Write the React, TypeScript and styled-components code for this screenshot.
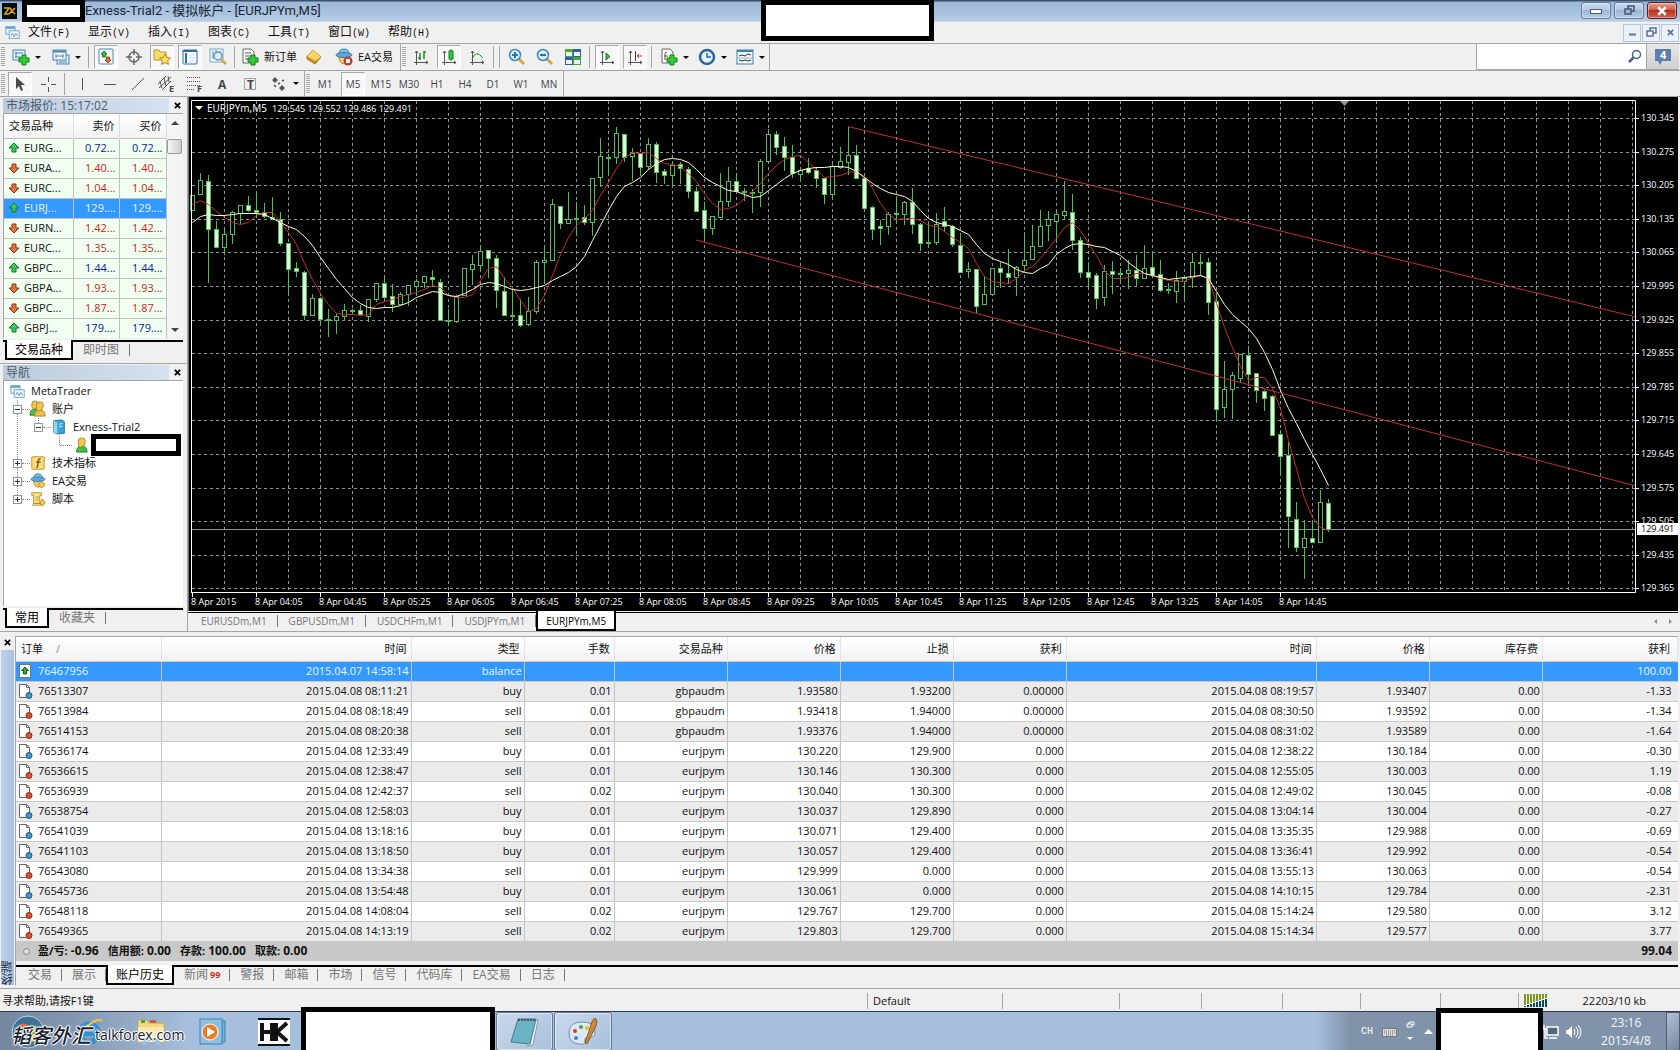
import React from "react";
import styled, { createGlobalStyle, css } from "styled-components";

const UI = `"Open Sans", "Noto Sans CJK SC", sans-serif`;

const GlobalStyle = createGlobalStyle`
  * { box-sizing: border-box; }
  body { margin: 0; background: #f0f0f0; font: 11px/16px ${UI}; color: #111; }
  button { font: inherit; color: inherit; background: none; border: 0; padding: 0; margin: 0; }
  table { border-collapse: collapse; table-layout: fixed; }
  ul { list-style: none; margin: 0; padding: 0; }
  svg { display: block; flex: none; overflow: visible; }
`;

/* ---------- shared pieces ---------- */

const Window = styled.div`
  display: flex;
  flex-direction: column;
  min-width: 1100px;
  overflow: hidden;
`;

const Mask = styled.div`
  background: #fff;
  border: 5px solid #000;
`;

const Spacer = styled.div`
  flex: 1;
`;

/* ---------- title bar and menu ---------- */

const Header = styled.header`
  position: relative;
`;

const TitleBar = styled.div`
  display: flex;
  align-items: center;
  height: 22px;
  padding: 0 3px 0 2px;
  background: linear-gradient(#3c506c 0, #3c506c 1px, #9db9d8 2px, #a9c2de 60%, #b7cde6 100%);
  border-bottom: 1px solid #c9d9ea;
`;

const AppIcon = styled.svg`
  margin-right: 5px;
`;

const TitleMask = styled(Mask)`
  width: 63px;
  height: 22px;
`;

const Title = styled.span`
  flex: 1;
  color: #1a2433;
  font: 13px/20px Roboto, "Noto Sans CJK SC", sans-serif;
`;

const CaptionButton = styled.button<{ $close?: boolean }>`
  display: grid;
  place-items: center;
  width: 30px;
  height: 17px;
  margin-left: 3px;
  border: 1px solid ${(p) => (p.$close ? "#5b1f22" : "#5f7a9c")};
  border-radius: 3px;
  background: ${(p) =>
    p.$close
      ? "linear-gradient(#e0a193, #cf5f4a 45%, #b8321e 50%, #d0634f)"
      : "linear-gradient(#c6d8ec, #b3cae3 45%, #9ab5d4 50%, #b5cce5)"};
  box-shadow: inset 0 0 0 1px rgba(255, 255, 255, 0.4);
`;

const MenuBar = styled.nav`
  display: flex;
  align-items: center;
  height: 21px;
  padding: 0 1px 0 5px;
  font-size: 12px;
`;

const MenuItem = styled.button`
  width: 60px;
  padding-left: 8px;
  text-align: left;
  white-space: nowrap;
`;

const MenuKey = styled.span`
  font: 10px/16px "Liberation Mono", monospace;
`;

const ChildButton = styled.button`
  display: grid;
  place-items: center;
  width: 18px;
  height: 18px;
  margin-left: 1px;
  border: 1px solid #b3c6da;
  background: #eaf1f9;
`;

const TopMask = styled(Mask)`
  position: absolute;
  top: 0;
  left: 45.3%;
  width: 173px;
  height: 41px;
`;

/* ---------- toolbars ---------- */

const Toolbar = styled.div<{ $h: number }>`
  display: flex;
  align-items: stretch;
  height: ${(p) => p.$h}px;
  border-top: 1px solid #a5a5a5;
`;

const ToolGroup = styled.div`
  display: flex;
  align-items: center;
  padding-left: 1px;
  border-right: 1px solid #a5a5a5;
`;

const Grip = styled.span`
  width: 4px;
  height: 20px;
  margin-right: 1px;
  background: repeating-linear-gradient(#a8a8a8 0 1px, #f0f0f0 1px 2px);
`;

const Divider = styled.span`
  width: 1px;
  height: 22px;
  margin: 0 3px 0 2px;
  background: #a5a5a5;
`;

const Tool = styled.button<{ $w?: number; $on?: boolean }>`
  display: flex;
  align-items: center;
  justify-content: center;
  gap: 5px;
  width: ${(p) => p.$w ?? 28}px;
  height: 24px;
  white-space: nowrap;
  font-size: 11px;
  ${(p) =>
    p.$on &&
    css`
      width: 24px;
      margin: 0 2px;
      background: #f8f8f8;
      border: 1px solid #a8a8a8;
      border-right-color: #fff;
      border-bottom-color: #fff;
    `}
`;

const Period = styled(Tool)`
  font-size: 10px;
  color: #444;
`;

const Caret = styled.span`
  border: 3px solid transparent;
  border-top-color: #000;
  border-bottom: 0;
`;

const SearchArea = styled.form`
  display: flex;
  margin-left: auto;
  padding-right: 1px;
`;

const SearchBox = styled.label`
  display: flex;
  align-items: center;
  width: 171px;
  padding-right: 4px;
  background: #fff;
  border: 1px solid #a5a5a5;
  border-top: 0;
`;

const SearchInput = styled.input`
  flex: 1;
  min-width: 0;
  border: 0;
  outline: 0;
  background: transparent;
  font: 11px/16px ${UI};
`;

const NewsButton = styled.button`
  display: grid;
  place-items: center;
  width: 32px;
  background: linear-gradient(#e8e8e8, #cfcfcf);
  border-bottom: 1px solid #a5a5a5;
`;

/* ---------- side panels ---------- */

const Workspace = styled.main`
  display: grid;
  grid-template-columns: 188px 1fr;
  border-top: 1px solid #a5a5a5;
`;

const Side = styled.aside`
  display: flex;
  flex-direction: column;
`;

const Panel = styled.section<{ $grow?: boolean }>`
  display: flex;
  flex-direction: column;
  flex: ${(p) => (p.$grow ? 1 : "none")};
  padding: 1px 4px 3px 3px;
  border-right: 1px solid #a5a5a5;
  border-bottom: 1px solid #a5a5a5;
`;

const PanelTitle = styled.div`
  display: flex;
  align-items: center;
  justify-content: space-between;
  height: 15px;
  background: linear-gradient(90deg, #bccbdc, #d5e2f0 92%, #f0f0f0 92%);
  color: #4c5a6b;
  font-size: 12px;
  line-height: 14px;
  padding: 0 1px 0 3px;
`;

const CloseButton = styled.button`
  display: grid;
  place-items: center;
  width: 9px;
  height: 12px;
`;

const PanelBody = styled.div<{ $grow?: boolean }>`
  display: flex;
  flex: ${(p) => (p.$grow ? 1 : "none")};
  flex-direction: ${(p) => (p.$grow ? "column" : "row")};
  background: ${(p) => (p.$grow ? "#fff" : "#f4f4f4")};
  border: 1px solid #a5a5a5;
  border-width: 1px 0 0 1px;
`;

const Quotes = styled.table`
  width: 162px;
  th {
    height: 24px;
    padding: 1px 4px 0 5px;
    font-weight: 400;
    text-align: right;
    background: linear-gradient(#fff, #f2f2f2);
    border-right: 1px solid #dedede;
  }
  th:first-child {
    text-align: left;
  }
`;

const QuoteRow = styled.tr<{ $up: boolean; $sel?: boolean }>`
  background: ${(p) => (p.$sel ? "#3399ff" : "#f0fff0")};
  td {
    height: 20px;
    padding: 0 3px 0 0;
    border: 1px solid #c0c0c0;
    border-width: 1px 1px 0 0;
    text-align: right;
    white-space: nowrap;
    color: ${(p) => (p.$sel ? "#e8f4ff" : p.$up ? "#10209a" : "#c8281e")};
  }
  td:first-child {
    color: ${(p) => (p.$sel ? "#e8f4ff" : "#111")};
  }
`;

const SymbolCell = styled.div`
  display: flex;
  align-items: center;
  gap: 4px;
  padding-left: 4px;
`;

const ScrollTrack = styled.div`
  display: flex;
  flex-direction: column;
  align-items: center;
  flex: 1;
  padding: 7px 0 6px;
`;

const ScrollArrow = styled.span<{ $down?: boolean }>`
  border: 4px solid transparent;
  border-width: ${(p) => (p.$down ? "4px 4px 0" : "0 4px 4px")};
  border-top-color: ${(p) => (p.$down ? "#444" : "transparent")};
  border-bottom-color: ${(p) => (p.$down ? "transparent" : "#444")};
`;

const ScrollThumb = styled.span`
  width: 15px;
  height: 15px;
  margin: 14px 0 auto;
  border: 1px solid #999;
  border-radius: 2px;
  background: linear-gradient(90deg, #f6f6f6, #cfcfcf);
`;

const Tabs = styled.div<{ $side?: boolean; $indent?: number }>`
  display: flex;
  align-items: flex-start;
  height: 20px;
  border-top: 2px solid #000;
  margin-top: ${(p) => (p.$side ? 2 : 0)}px;
  padding-left: ${(p) => p.$indent ?? 2}px;
`;

const Tab = styled.button<{ $on?: boolean; $pad?: number }>`
  display: flex;
  align-items: center;
  height: 16px;
  padding-left: ${(p) => p.$pad ?? 10}px;
  font-size: 12px;
  color: #777;
  white-space: nowrap;
  &::after {
    content: "";
    width: 1px;
    height: 12px;
    margin-left: ${(p) => (p.$pad ? p.$pad - 1 : 10)}px;
    background: #777;
  }
  ${(p) =>
    p.$on &&
    css`
      height: 20px;
      margin-top: -2px;
      padding: 1px 8px 0;
      background: #fff;
      color: #000;
      border: solid #000;
      border-width: 0 2px 2px;
      &::after {
        display: none;
      }
    `}
`;

const ChartTab = styled(Tab)`
  font-size: 10px;
`;

/* ---------- navigator tree ---------- */

const Tree = styled.ul`
  padding-top: 1px;
`;

const Branch = styled.ul<{ $x: number; $end: number }>`
  position: relative;
  &::before {
    content: "";
    position: absolute;
    top: 0;
    bottom: ${(p) => p.$end}px;
    left: ${(p) => p.$x}px;
    border-left: 1px dotted #888;
  }
`;

const TreeRow = styled.div<{ $indent: number }>`
  position: relative;
  display: flex;
  align-items: center;
  height: 18px;
  padding-left: ${(p) => p.$indent}px;
  white-space: nowrap;
`;

const Toggle = styled.button`
  display: grid;
  place-items: center;
  width: 9px;
  height: 9px;
  border: 1px solid #8a97a8;
  background: #fff;
`;

const Dots = styled.span<{ $w?: number }>`
  width: ${(p) => p.$w ?? 8}px;
  border-top: 1px dotted #888;
`;

const TreeLabel = styled.span`
  margin-left: 6px;
`;

const TreeMask = styled(Mask)`
  width: 90px;
  height: 22px;
  margin-left: 3px;
`;

/* ---------- chart ---------- */

const ChartColumn = styled.section`
  display: flex;
  flex-direction: column;
  padding-right: 2px;
  border-bottom: 1px solid #a5a5a5;
`;

const ChartSvg = styled.svg`
  width: 100%;
  height: auto;
  overflow: hidden;
  background: #000;
  font-family: "Open Sans", sans-serif;
  font-size: 9px;
`;

const ChartTabs = styled(Tabs)`
  height: 19px;
  border-top-width: 1px;
  margin-top: 1px;
`;

const TabScroll = styled.div`
  display: flex;
  gap: 10px;
  margin-left: auto;
  padding: 4px 4px 0 0;
  color: #8c8c8c;
`;

/* ---------- terminal ---------- */

const Terminal = styled.section`
  display: grid;
  grid-template-columns: 15px 1fr;
  padding: 4px 2px 3px 0;
`;

const Rail = styled.div`
  display: flex;
  flex-direction: column;
  align-items: center;
`;

const RailLabel = styled.div`
  flex: 1;
  width: 13px;
  margin-top: 2px;
  background: linear-gradient(90deg, #a9c2e0, #bcd2ec);
  writing-mode: vertical-rl;
  transform: rotate(180deg);
  font-size: 12px;
  line-height: 13px;
  color: #1d2b40;
`;

const TerminalBody = styled.div`
  border: 1px solid #a5a5a5;
  border-width: 1px 0 0 1px;
`;

const Orders = styled.table`
  width: 100%;
  background: #fff;
  th {
    height: 24px;
    padding: 1px 4px 0 5px;
    font-weight: 400;
    text-align: right;
    background: linear-gradient(#fff, #f1f1f1);
    border-right: 1px solid #e2e6ea;
  }
  th:first-child {
    text-align: left;
  }
  th:last-child {
    padding-right: 7px;
  }
`;

const OrderRow = styled.tr<{ $alt?: boolean; $sel?: boolean }>`
  background: ${(p) => (p.$sel ? "#3399ff" : p.$alt ? "#ebebeb" : "#fff")};
  color: ${(p) => (p.$sel ? "#e8f4ff" : "#111")};
  td {
    height: 20px;
    padding: 0 2px 0 3px;
    text-align: right;
    white-space: nowrap;
    border-right: 1px solid #c4c4c4;
    border-top: 1px solid #c9c9c9;
  }
  td:last-child {
    padding-right: 6px;
    border-right: 0;
  }
`;

const OrderCell = styled.div`
  display: flex;
  align-items: center;
  gap: 6px;
`;

const SortMark = styled.span`
  margin-left: 13px;
  color: #888;
`;

const Summary = styled.div`
  display: flex;
  align-items: center;
  gap: 8px;
  height: 20px;
  margin-bottom: 4px;
  padding: 0 6px 0 7px;
  background: #c8c8c8;
  font-size: 12px;
  font-weight: 700;
`;

const Total = styled.span`
  margin-right: 1px;
`;

const TotalName = styled.span`
  font-size: 11px;
`;

const Badge = styled.span`
  margin-left: 2px;
  color: #d22b22;
  font-size: 9px;
  font-weight: 700;
`;

/* ---------- status bar and taskbar ---------- */

const StatusBar = styled.footer`
  display: flex;
  align-items: center;
  height: 23px;
  padding: 1px 34px 0 2px;
  border-top: 1px solid #a5a5a5;
`;

const StatusCell = styled.div<{ $w: number }>`
  width: ${(p) => p.$w}px;
  height: 16px;
  padding-left: 5px;
  border-left: 1px solid #a5a5a5;
`;

const StatusText = styled.div`
  flex: 1;
`;

const Traffic = styled.div`
  display: flex;
  align-items: center;
  justify-content: space-between;
  width: 128px;
  padding-left: 5px;
  border-left: 1px solid #a5a5a5;
`;

const Taskbar = styled.footer`
  position: relative;
  display: flex;
  align-items: center;
  height: 40px;
  border-top: 1px solid #2d3b4d;
  background: linear-gradient(90deg, #74879f 0, #8296b0 70px, #a5bfdc 190px, #a5bfdc calc(100% - 364px), #8193aa calc(100% - 330px), #8193aa 100%);
`;

const Launch = styled.button<{ $w: number; $open?: boolean }>`
  display: grid;
  place-items: center;
  width: ${(p) => p.$w}px;
  height: 39px;
  ${(p) =>
    p.$open &&
    css`
      margin-left: 1px;
      border: 1px solid #64799a;
      border-radius: 3px;
      background: linear-gradient(135deg, #c9daec, #a8c0dc);
      box-shadow: inset 0 0 0 1px rgba(255, 255, 255, 0.5);
    `}
`;

const TaskMask = styled(Mask)`
  align-self: stretch;
  width: 194px;
  margin-top: -5px;
  border-bottom: 0;
`;

const TrayMask = styled(Mask)`
  align-self: stretch;
  width: 107px;
  margin-top: -4px;
  border-bottom: 0;
`;

const Watermark = styled.div`
  position: absolute;
  top: 11px;
  left: 11px;
  display: flex;
  align-items: center;
  color: #16202e;
  white-space: nowrap;
  text-shadow: 1px 0 #fff, -1px 0 #fff, 0 1px #fff, 0 -1px #fff, 0 0 3px #fff;
`;

const Brush = styled.span`
  font: italic 500 20px/24px "Noto Sans CJK SC", sans-serif;
`;

const Site = styled.span`
  margin-left: 4px;
  font: 500 14px/20px "Open Sans", sans-serif;
`;

const Tray = styled.div`
  display: flex;
  align-items: center;
  gap: 9px;
  padding-right: 3px;
  color: #fff;
  font: 10px/16px "Liberation Mono", monospace;
`;

const Clock = styled.div`
  width: 66px;
  margin: 0 7px 0 11px;
  color: #f4f8fc;
  font-size: 12px;
  line-height: 18px;
  text-align: center;
`;

const ShowDesktop = styled.button`
  width: 14px;
  height: 39px;
  border: 1px solid #4c5d74;
  background: linear-gradient(135deg, #b4c2d3, #74879f);
`;

/* ---------- icons ---------- */

const Plus = ({ x = 7, y = 7 }: { x?: number; y?: number }) => (
  <path
    transform={`translate(${x} ${y})`}
    d="M3 0h4v3h3v4H7v3H3V7H0V3h3z"
    fill="#35cf35"
    stroke="#0b7d16"
    strokeWidth="1"
  />
);

const Svg = ({ size = 18, children }: { size?: number; children: React.ReactNode }) => (
  <svg width={size} height={size} viewBox="0 0 18 18" fill="none">
    {children}
  </svg>
);

const NewChart = () => (
  <Svg>
    <rect x="1" y="2" width="12" height="10" fill="#e6f3fc" stroke="#4585b5" />
    <path d="M3 5h8M4 4v6M3 9h6" stroke="#4585b5" />
    <Plus />
  </Svg>
);
const Profiles = () => (
  <Svg>
    <rect x="5" y="7" width="12" height="9" fill="#dcecf8" stroke="#4585b5" />
    <rect x="1" y="2" width="13" height="10" fill="#eef7fd" stroke="#4585b5" />
    <path d="M1 3.500h13" stroke="#4585b5" strokeWidth="2" />
    <path d="M4 6v4M11 6v4M4 8h7M7 14h8" stroke="#6b7f90" />
  </Svg>
);
const MarketIcon = () => (
  <Svg>
    <rect x="2" y="1" width="14" height="15" rx="1" fill="#fff" stroke="#4585b5" />
    <path d="M7 3l3 3H8.500v3h-3V6H4z" fill="#3fc13f" stroke="#168026" />
    <path d="M11 15l3-3h-1.500V9h-3v3H8z" fill="#e8734b" stroke="#a83b1c" />
  </Svg>
);
const Crosshair = () => (
  <Svg>
    <circle cx="9" cy="9" r="5" stroke="#666" strokeWidth="1.500" />
    <path d="M9 1v6M9 11v6M1 9h6M11 9h6" stroke="#666" strokeWidth="1.500" />
  </Svg>
);
const Star = () => (
  <Svg>
    <path d="M1 2h5l1 2h6v8H1z" fill="#f7dc72" stroke="#b9932a" />
    <path d="M12 6l1.700 3.500 3.800.5-2.800 2.600.7 3.800-3.400-1.800-3.400 1.800.7-3.800L6.500 10l3.800-.5z" fill="#ffe45c" stroke="#b38a1d" />
  </Svg>
);
const Book = () => (
  <Svg>
    <rect x="2" y="2" width="14" height="14" rx="1" fill="#f5fafe" stroke="#2e6ca5" />
    <path d="M2 3h14" stroke="#2e6ca5" strokeWidth="2" />
    <path d="M4 5h2v10H4z" fill="#2e6ca5" />
    <path d="M8 7h6M8 10h6M8 13h6" stroke="#cfdfec" />
  </Svg>
);
const Tester = () => (
  <Svg>
    <rect x="1" y="1" width="13" height="13" fill="#eef7fd" stroke="#7ba8cc" />
    <path d="M4 3v8M7 2v6M11 3v5" stroke="#4585b5" />
    <circle cx="9" cy="8" r="4" fill="#d9ecfa" stroke="#6c93b5" strokeWidth="1.500" />
    <path d="M12 11l5 5" stroke="#d7a53c" strokeWidth="2.500" />
  </Svg>
);
const Sheet = ({ script }: { script?: boolean }) => (
  <Svg>
    <path d="M2 1h8l3 3v11H2z" fill="#fff" stroke="#666" />
    <path d={script ? "M5 12V6q0-2 2-2M4 8h4" : "M4 5h6M4 8h6M4 11h4"} stroke="#555" />
    <Plus />
  </Svg>
);
const Gold = () => (
  <Svg>
    <path d="M2 8l6-6 8 7-6 7-8-5z" fill="#c98f25" stroke="#a8761c" />
    <path d="M2 8l6-6 8 7-6 4z" fill="#f7d365" />
  </Svg>
);
const Hat = ({ badge, size }: { badge?: boolean; size?: number }) => (
  <Svg size={size}>
    <path d="M4 9h10q0 6-5 7-5-1-5-7z" fill="#f1cf6c" stroke="#b58a2b" />
    <path d="M4 6q0-5 5-5t5 5z" fill="#7cc0e8" stroke="#3c82b4" />
    <ellipse cx="9" cy="7" rx="8" ry="2.500" fill="#5ba7d8" stroke="#3c82b4" />
    {badge ? (
      <>
        <circle cx="13" cy="13" r="4.500" fill="#c9372a" />
        <rect x="11" y="11" width="4" height="4" fill="#fff" />
      </>
    ) : (
      <path d="M13 9l4 4-4 4-4-4z" fill="#f3cd55" stroke="#a8801f" />
    )}
  </Svg>
);
const Axes = ({ children }: { children?: React.ReactNode }) => (
  <Svg>
    <path d="M4.500 3v14M2 14.500h14M3 5l1.500-2L6 5M14 13l2 1.500-2 1.500" stroke="#555" />
    {children}
  </Svg>
);
const Zoom = ({ plus }: { plus?: boolean }) => (
  <Svg>
    <path d="M11 11l5 5" stroke="#d7a53c" strokeWidth="3" />
    <circle cx="7" cy="7" r="5.500" fill="#dcf0fc" stroke="#3f86bd" strokeWidth="1.500" />
    <path d={plus ? "M4 7h6M7 4v6" : "M4 7h6"} stroke="#2a74ae" strokeWidth="2" />
  </Svg>
);
const Tiles = () => (
  <Svg>
    <path d="M1 1h8v8H1z" fill="#4fa32f" />
    <path d="M9 1h8v8H9z" fill="#2b5fa8" />
    <path d="M1 9h8v8H1z" fill="#2b5fa8" />
    <path d="M9 9h8v8H9z" fill="#4fa32f" />
    <path d="M2 4h6v4H2zM10 4h6v4h-6zM2 12h6v4H2zM10 12h6v4h-6z" fill="#eaf4fb" />
  </Svg>
);
const ClockIcon = () => (
  <Svg>
    <circle cx="9" cy="9" r="7" fill="#e4f1fb" stroke="#28659f" strokeWidth="2.500" />
    <path d="M9 5v4h4" stroke="#28659f" strokeWidth="1.500" />
  </Svg>
);
const Template = () => (
  <Svg>
    <rect x="1" y="2" width="16" height="14" fill="#f3fafe" stroke="#3d7fb3" />
    <path d="M1 3h16" stroke="#3d7fb3" strokeWidth="2" />
    <path d="M3 8l3-1 3 1 3-2 3 1M3 12l3 1 3-1 3 1 3-1" stroke="#333" />
    <path d="M1 10h16" stroke="#8db7d6" />
  </Svg>
);
const Cursor = () => (
  <Svg>
    <path d="M5 2v12l3-3 2 5 2-1-2-5h4z" fill="#4a4a4a" />
  </Svg>
);
const Line = ({ d }: { d: string }) => (
  <Svg>
    <path d={d} stroke="#555" />
  </Svg>
);
const IconText = styled.text<{ $big?: boolean }>`
  font: 700 ${(p) => (p.$big ? 12 : 9)}px "Open Sans", sans-serif;
  fill: #444;
`;
const Channel = () => (
  <Svg>
    <path d="M1 9L9 1M2 13L14 2M5 15l9-9M3 6l2 7M7 3l2 8M11 1l1 6" stroke="#555" />
    <IconText x="12" y="17">E</IconText>
  </Svg>
);
const Fibo = () => (
  <Svg>
    <path d="M2 2.500h14M2 6.500h14M2 10.500h14M2 14.500h8" stroke="#555" strokeDasharray="1 1" />
    <IconText x="12" y="17">F</IconText>
  </Svg>
);
const LetterA = () => (
  <Svg>
    <IconText $big x="5" y="14">A</IconText>
  </Svg>
);
const LetterT = () => (
  <Svg>
    <rect x="3.500" y="3.500" width="11" height="11" stroke="#555" strokeDasharray="1 1" />
    <IconText $big x="6" y="14">T</IconText>
  </Svg>
);
const Shapes = () => (
  <Svg>
    <path d="M2 5l3-3 3 3-3 3zM9 13l3-3 3 3-3 3z" fill="#555" />
    <path d="M4 10l2 2M8 9l2-1M12 6l2-1" stroke="#555" strokeWidth="1.500" />
  </Svg>
);
const Windows = ({ size = 15 }: { size?: number }) => (
  <Svg size={size}>
    <rect x="1" y="2" width="11" height="9" fill="#e8f4fb" stroke="#5b9cc7" />
    <path d="M1 3.500h11" stroke="#5b9cc7" strokeWidth="2" />
    <rect x="5" y="7" width="12" height="9" fill="#f3fafe" stroke="#5b9cc7" />
    <path d="M7 13l2-3 2 4 2-4 2 3" stroke="#4585b5" />
  </Svg>
);
const Arrow = ({ up, size = 12 }: { up: boolean; size?: number }) => (
  <svg width={size} height={size} viewBox="0 0 12 12">
    <path
      transform={up ? undefined : "rotate(180 6 6)"}
      d="M6 1l5 5H8v4H4V6H1z"
      fill={up ? "#3dc45a" : "#e8703c"}
      stroke={up ? "#0d7a2a" : "#8f3312"}
    />
  </svg>
);
const People = ({ pair }: { pair?: boolean }) => (
  <Svg size={16}>
    {pair && <path d="M0 16q0-7 5-7t6 7z" fill="#42c043" stroke="#1b8424" />}
    {pair && <path d="M2 4q0-4 3.500-4T9 4 5.500 9 2 4z" fill="#f2c84e" stroke="#a97b1c" />}
    <path d="M5 17q0-7 6-7t6 7z" fill={pair ? "#eec04a" : "#42c043"} stroke={pair ? "#a97b1c" : "#1b8424"} />
    <path d="M7 5q0-4 4-4t4 4-4 6-4-6z" fill="#f2c84e" stroke="#a97b1c" />
  </Svg>
);
const Server = () => (
  <Svg size={16}>
    <path d="M3 2l9-1 3 2v13l-8 1-4-2z" fill="#38a3e0" stroke="#1c6c9f" />
    <path d="M3 2l4 2v13l-4-2z" fill="#9bd5f2" />
    <path d="M9 6l4-1M9 9l4-1" stroke="#e9f6fd" />
  </Svg>
);
const Indicator = () => (
  <Svg size={16}>
    <rect x="2" y="2" width="14" height="14" rx="1" fill="#fbe07a" stroke="#b58a2b" />
    <path d="M7 14q2 0 2-5t3-5M7 8h5" stroke="#7a4c12" strokeWidth="1.500" />
  </Svg>
);
const ScriptIcon = () => (
  <Svg size={16}>
    <path d="M2 2h11v3h-2v9H4V5H2zM4 14h8v2H3z" fill="#fbe38a" stroke="#b58a2b" />
    <path d="M6 7h4M6 10h4" stroke="#b58a2b" />
    <path d="M14 9l3 4-3 4-3-4z" fill="#f3cd55" stroke="#a8801f" />
  </Svg>
);
const OrderIcon = ({ kind }: { kind: string }) =>
  kind === "balance" ? (
    <svg width="13" height="14" viewBox="0 0 13 14">
      <rect x=".5" y=".5" width="11" height="13" fill="#fff" stroke="#777" />
      <path d="M6 3l3.500 3.500h-2V10h-3V6.500h-2z" fill="#2fa836" stroke="#0c5d14" />
    </svg>
  ) : (
    <svg width="13" height="15" viewBox="0 0 13 15">
      <path d="M.5.5h7l3 3v10H.5z" fill="#fff" stroke="#666" />
      <path d="M7.500.5v3h3" fill="none" stroke="#666" />
      <circle cx="10" cy="11.500" r="3" fill={kind === "buy" ? "#3f95cf" : "#d8542c"} stroke={kind === "buy" ? "#175a8b" : "#8c2b10"} />
    </svg>
  );
const Cross = ({ color = "#000", size = 7 }: { color?: string; size?: number }) => (
  <svg width={size} height={size} viewBox="0 0 8 8">
    <path d="M1 1l6 6M7 1L1 7" stroke={color} strokeWidth="2" />
  </svg>
);
const Restore = ({ color }: { color: string }) => (
  <svg width="11" height="11" viewBox="0 0 11 11" fill="none">
    <path d="M4 4V1h6v5H7" stroke={color} strokeWidth="1.500" />
    <rect x="1" y="4" width="6" height="5" fill="none" stroke={color} strokeWidth="1.500" />
  </svg>
);

/* ---------- chart drawing ---------- */

// high, body top, body bottom, low (in thirds of a pixel below y 95); 1 marks a falling candle
const CANDLES: number[][] = [
  [301,301,346,346,0],[235,256,298,298,0],[240,259,401,563,1],[378,401,455,455,1],[405,418,455,480,0],[348,352,418,446,0],
  [331,331,354,388,0],[303,331,346,352,1],[298,346,352,360,1],[325,352,363,370,1],[306,365,371,374,1],[352,371,445,452,1],
  [445,445,521,602,1],[501,519,527,546,1],[527,532,661,674,1],[597,610,661,661,0],[605,610,671,694,1],[643,671,675,725,1],
  [655,664,675,716,0],[628,646,664,676,0],[643,646,648,660,1],[630,646,656,656,1],[612,612,662,680,0],[565,565,613,620,0],
  [550,563,605,612,1],[568,603,626,650,1],[590,596,626,630,0],[570,571,596,632,0],[553,559,572,600,0],[542,544,560,580,0],
  [525,546,552,575,1],[553,562,676,678,1],[643,675,677,685,1],[600,602,677,683,0],[520,520,600,600,0],[480,508,521,570,0],
  [450,468,511,525,0],[466,466,490,548,1],[480,490,586,638,1],[545,588,659,663,1],[580,660,662,668,1],[613,661,691,695,1],
  [607,649,688,692,0],[495,502,647,657,0],[450,496,502,560,0],[313,328,496,498,0],[334,334,385,402,1],[292,373,385,386,0],
  [320,368,372,418,1],[330,366,380,390,1],[250,250,382,422,0],[130,184,247,277,0],[178,186,188,238,1],[97,115,187,208,0],
  [118,118,185,202,1],[160,175,184,258,0],[175,175,217,240,1],[130,148,214,225,0],[142,148,230,264,1],[222,228,241,266,1],
  [200,210,241,275,0],[200,208,220,266,1],[215,222,287,310,1],[275,289,347,347,1],[322,346,398,435,1],[364,364,398,420,0],
  [235,319,365,368,0],[215,259,319,335,0],[235,259,287,292,1],[280,289,291,318,1],[283,291,293,354,1],[193,199,292,335,0],
  [102,118,199,202,0],[108,118,155,180,1],[126,154,187,228,1],[150,187,234,250,1],[220,226,236,257,0],[190,220,230,236,1],
  [215,226,250,278,1],[250,250,296,326,1],[205,214,296,308,0],[157,199,217,222,0],[96,181,200,240,0],[150,181,250,250,1],
  [240,250,338,340,1],[332,337,401,434,1],[376,394,398,450,1],[352,356,394,420,0],[304,354,358,383,1],[318,321,358,390,0],
  [280,321,388,416,1],[383,388,443,467,1],[383,441,443,456,1],[354,386,442,450,0],[337,378,394,410,1],[390,394,448,455,1],
  [418,450,530,530,1],[500,522,528,550,0],[522,522,632,654,1],[542,597,628,628,0],[518,520,597,600,0],[500,519,532,580,1],
  [463,535,547,567,1],[513,515,547,602,0],[411,496,510,530,0],[390,454,493,495,0],[346,394,454,457,0],[348,373,391,438,0],
  [350,358,377,444,0],[258,349,359,375,0],[298,350,436,464,1],[425,436,532,548,1],[502,532,545,575,1],[535,541,608,643,1],
  [510,529,605,632,0],[498,529,536,598,1],[520,534,538,565,1],[495,525,535,583,0],[480,525,548,573,1],[450,520,549,551,0],
  [478,517,541,550,1],[495,538,584,590,1],[565,582,586,597,1],[528,555,587,623,0],[545,548,557,615,0],[475,501,547,580,0],
  [477,502,504,540,1],[488,502,620,660,1],[595,619,942,977,1],[798,883,935,970,0],[832,840,883,972,0],[778,778,849,860,0],
  [753,779,836,863,1],[835,835,886,925,1],[885,888,908,947,1],[900,904,1019,1019,1],[1005,1018,1082,1140,1],[1040,1081,1262,1358,1],
  [1222,1271,1357,1370,1],[1275,1330,1357,1452,0],[1275,1330,1340,1340,1],[1185,1222,1340,1345,0],[1212,1225,1303,1310,1],
];

const SLOW = [
  382,362,357,361,360,356,355,355,355,358,368,382,394,402,424,450,487,520,552,580,606,624,637,640,635,636,630,620,607,597,
  589,590,600,602,594,582,568,560,563,574,583,586,583,575,571,555,544,532,513,484,436,390,345,302,274,260,245,222,205,193,
  190,193,201,222,245,262,274,284,289,297,306,302,284,268,250,234,225,220,217,217,213,212,215,227,245,263,280,291,298,302,
  318,344,370,380,386,392,405,418,448,475,488,498,508,522,531,535,520,506,478,458,446,445,446,454,457,467,480,500,518,535,
  540,547,551,549,547,544,541,550,587,627,657,677,700,730,770,823,885,940,985,1033,1077,1123,1170,
];

const FAST = [
  328,316,328,348,365,380,388,380,360,350,352,378,412,448,505,552,593,628,655,657,656,661,656,628,617,611,603,597,590,582,
  569,576,600,607,607,598,556,518,514,548,577,614,647,640,600,540,478,425,390,370,345,300,260,220,185,172,175,170,188,203,
  207,212,235,258,295,325,343,340,330,308,288,265,235,210,193,182,180,200,222,246,243,240,232,228,244,280,325,358,372,368,
  368,375,390,394,407,425,440,458,505,542,558,560,563,550,525,512,490,460,430,395,380,405,445,480,525,550,550,545,535,535,
  540,548,556,558,558,545,540,550,625,695,755,812,855,845,847,880,938,1035,1120,1208,1265,1295,1305,
];

const PRICES = Array.from({ length: 15 }, (_, i) => (130.345 - i * 0.07).toFixed(3));
const TIMES = ["2015", "04:05", "04:45", "05:25", "06:05", "06:45", "07:25", "08:05", "08:45", "09:25", "10:05", "10:45", "11:25", "12:05", "12:45", "13:25", "14:05", "14:45"];

const toY = (v: number) => 95 + Math.round(v / 3);
const toX = (i: number) => 192 + i * 8;
const gridY = (i: number) => 118 + Math.round(i * 33.6);
const toPoints = (list: number[]) => list.map((v, i) => `${toX(i) + 0.5},${toY(v) + 0.5}`).join(" ");

const Chart = () => (
  <ChartSvg viewBox="188 97 1490 514" role="img" aria-label="EURJPYm,M5">
    <g stroke="#8f9498" strokeDasharray="3 3" shapeRendering="crispEdges">
      {PRICES.map((p, i) => (
        <path key={p} d={`M192 ${gridY(i) + 0.5}H1635`} />
      ))}
      {Array.from({ length: 45 }, (_, i) => (
        <path key={i} d={`M${224.5 + i * 32} 101V591`} />
      ))}
    </g>
    <path d="M192 529.500H1635" stroke="#8f9498" />
    {CANDLES.map(([h, t, b, l, down], i) => {
      const top = toY(t);
      const height = Math.max(toY(b) - top, 1);
      return (
        <g key={i} stroke="#4fc050">
          <path d={`M${toX(i) + 0.5} ${toY(h)}V${top}M${toX(i) + 0.5} ${toY(b)}V${toY(l)}`} />
          <rect x={toX(i) - 1.5} y={top + 0.5} width="4" height={height} fill={down ? "#dcffdc" : "#000"} />
        </g>
      );
    })}
    <g fill="none">
      <polyline points={toPoints(FAST)} stroke="#c42c2c" />
      <polyline points={toPoints(SLOW)} stroke="#ffffc4" />
      <path d="M848 126.500L1636 317M696 240L1636 486" stroke="#c03030" />
      <path d="M188.500 611V97" stroke="#777" />
      <path d="M191.500 592.500V100.500H1635.500V592.500H191" stroke="#fff" />
      {PRICES.map((p, i) => (
        <path key={p} d={`M1636 ${gridY(i) + 0.5}h3`} stroke="#fff" />
      ))}
      {TIMES.map((t, i) => (
        <path key={t} d={`M${192.5 + i * 64} 593v4`} stroke="#fff" />
      ))}
    </g>
    <path d="M195 106h8l-4 4z" fill="#fff" />
    <path d="M1340 101h9l-4.500 5z" fill="#8b959d" />
    <g fill="#fff">
      <text x="207" y="112" fontSize="10">EURJPYm,M5</text>
      <text x="272" y="112">129.545 129.552 129.486 129.491</text>
      {PRICES.map((p, i) => (
        <text key={p} x="1641" y={gridY(i) + 3}>{p}</text>
      ))}
      {TIMES.map((t, i) => (
        <text key={t} x={191 + i * 64} y="605">{`8 Apr ${t}`}</text>
      ))}
    </g>
    <rect x="1637" y="523" width="41" height="12" fill="#fff" />
    <text x="1641" y="532" fill="#000">129.491</text>
  </ChartSvg>
);

/* ---------- data ---------- */

const MENUS = [["文件", "F"], ["显示", "V"], ["插入", "I"], ["图表", "C"], ["工具", "T"], ["窗口", "W"], ["帮助", "H"]];
const PERIODS = ["M1", "M5", "M15", "M30", "H1", "H4", "D1", "W1", "MN"];

const QUOTES: [string, string, boolean][] = [
  ["EURG...", "0.72...", true], ["EURA...", "1.40...", false], ["EURC...", "1.04...", false], ["EURJ...", "129....", true],
  ["EURN...", "1.42...", false], ["EURC...", "1.35...", false], ["GBPC...", "1.44...", true], ["GBPA...", "1.93...", false],
  ["GBPC...", "1.87...", false], ["GBPJ...", "179....", true],
];

const COLUMNS: [string, number][] = [
  ["订单", 145], ["时间", 250], ["类型", 113], ["手数", 90], ["交易品种", 113], ["价格", 113], ["止损", 113],
  ["获利", 113], ["时间", 250], ["价格", 113], ["库存费", 113], ["获利", 135],
];

const ORDERS = [
  "76467956|2015.04.07 14:58:14|balance||||||||| 100.00",
  "76513307|2015.04.08 08:11:21|buy|0.01|gbpaudm|1.93580|1.93200|0.00000|2015.04.08 08:19:57|1.93407|0.00|-1.33",
  "76513984|2015.04.08 08:18:49|sell|0.01|gbpaudm|1.93418|1.94000|0.00000|2015.04.08 08:30:50|1.93592|0.00|-1.34",
  "76514153|2015.04.08 08:20:38|sell|0.01|gbpaudm|1.93376|1.94000|0.00000|2015.04.08 08:31:02|1.93589|0.00|-1.64",
  "76536174|2015.04.08 12:33:49|buy|0.01|eurjpym|130.220|129.900|0.000|2015.04.08 12:38:22|130.184|0.00|-0.30",
  "76536615|2015.04.08 12:38:47|sell|0.01|eurjpym|130.146|130.300|0.000|2015.04.08 12:55:05|130.003|0.00|1.19",
  "76536939|2015.04.08 12:42:37|sell|0.02|eurjpym|130.040|130.300|0.000|2015.04.08 12:49:02|130.045|0.00|-0.08",
  "76538754|2015.04.08 12:58:03|buy|0.01|eurjpym|130.037|129.890|0.000|2015.04.08 13:04:14|130.004|0.00|-0.27",
  "76541039|2015.04.08 13:18:16|buy|0.01|eurjpym|130.071|129.400|0.000|2015.04.08 13:35:35|129.988|0.00|-0.69",
  "76541103|2015.04.08 13:18:50|buy|0.01|eurjpym|130.057|129.400|0.000|2015.04.08 13:36:41|129.992|0.00|-0.54",
  "76543080|2015.04.08 13:34:38|sell|0.01|eurjpym|129.999|0.000|0.000|2015.04.08 13:55:13|130.063|0.00|-0.54",
  "76545736|2015.04.08 13:54:48|buy|0.01|eurjpym|130.061|0.000|0.000|2015.04.08 14:10:15|129.784|0.00|-2.31",
  "76548118|2015.04.08 14:08:04|sell|0.02|eurjpym|129.767|129.700|0.000|2015.04.08 15:14:24|129.580|0.00|3.12",
  "76549365|2015.04.08 14:13:19|sell|0.02|eurjpym|129.803|129.700|0.000|2015.04.08 15:14:34|129.577|0.00|3.77",
].map((line) => line.split("|"));

const TOTALS = [["盈/亏:", "-0.96"], ["信用额:", "0.00"], ["存款:", "100.00"], ["取款:", "0.00"]];
const CHARTS = ["EURUSDm,M1", "GBPUSDm,M1", "USDCHFm,M1", "USDJPYm,M1", "EURJPYm,M5"];
const TERMINAL_TABS = ["交易", "展示", "账户历史", "新闻", "警报", "邮箱", "市场", "信号", "代码库", "EA交易", "日志"];

/* ---------- page ---------- */

export default function App() {
  return (
    <Window>
      <GlobalStyle />
      <Header>
        <TitleBar>
          <AppIcon width="15" height="16" viewBox="0 0 15 16">
            <rect width="15" height="16" fill="#0c0c0c" />
            <path d="M2 5h5L3 11h4M7 11l6-6M8 5l2 3 3 3" stroke="#d9a62e" strokeWidth="1.500" fill="none" />
          </AppIcon>
          <TitleMask />
          <Title>Exness-Trial2 - 模拟帐户 - [EURJPYm,M5]</Title>
          <CaptionButton aria-label="最小化">
            <svg width="12" height="6" viewBox="0 0 12 6"><rect x=".5" y="1.500" width="11" height="4" fill="#fff" stroke="#4a5b73" /></svg>
          </CaptionButton>
          <CaptionButton aria-label="还原"><Restore color="#44556e" /></CaptionButton>
          <CaptionButton $close aria-label="关闭"><Cross color="#fff" size={10} /></CaptionButton>
        </TitleBar>
        <MenuBar>
          <Windows />
          {MENUS.map(([name, key]) => (
            <MenuItem key={key}>{name}<MenuKey>({key})</MenuKey></MenuItem>
          ))}
          <Spacer />
          <ChildButton aria-label="最小化图表">
            <svg width="7" height="7" viewBox="0 0 7 7"><path d="M0 5.500h7" stroke="#5b7593" strokeWidth="2" /></svg>
          </ChildButton>
          <ChildButton aria-label="还原图表"><Restore color="#5b7593" /></ChildButton>
          <ChildButton aria-label="关闭图表"><Cross color="#5b7593" /></ChildButton>
        </MenuBar>
        <TopMask />
      </Header>

      <Toolbar $h={27}>
        <ToolGroup>
          <Grip />
          <Tool $w={40} aria-label="新图表"><NewChart /><Caret /></Tool>
          <Tool $w={40} aria-label="配置文件"><Profiles /><Caret /></Tool>
          <Divider />
          <Tool $on aria-label="市场报价"><MarketIcon /></Tool>
          <Tool aria-label="数据窗口"><Crosshair /></Tool>
          <Tool $on aria-label="导航"><Star /></Tool>
          <Tool $on aria-label="终端"><Book /></Tool>
          <Tool aria-label="策略测试"><Tester /></Tool>
          <Divider />
          <Tool $w={62}><Sheet />新订单</Tool>
          <Tool aria-label="编辑器"><Gold /></Tool>
          <Tool $w={72}><Hat badge />EA交易</Tool>
        </ToolGroup>
        <ToolGroup>
          <Grip />
          <Tool aria-label="柱状图"><Axes><path d="M8 5v7M8 10H6M12 3v8M12 4h2" stroke="#1e8a2a" strokeWidth="1.500" /></Axes></Tool>
          <Tool $on aria-label="蜡烛图"><Axes><path d="M11 1v12" stroke="#167a22" /><rect x="9" y="3" width="4" height="8" fill="#34c940" stroke="#167a22" /></Axes></Tool>
          <Tool aria-label="折线图"><Axes><path d="M4 11q4-10 11-1" stroke="#1e8a2a" /></Axes></Tool>
          <Divider />
          <Divider />
          <Tool aria-label="放大"><Zoom plus /></Tool>
          <Tool aria-label="缩小"><Zoom /></Tool>
          <Tool aria-label="平铺"><Tiles /></Tool>
          <Divider />
          <Tool $on aria-label="自动滚动"><Axes><path d="M8 5l4 3.500L8 12z" fill="#34c940" stroke="#167a22" /></Axes></Tool>
          <Tool $on aria-label="图表平移"><Axes><path d="M9.500 3v10" stroke="#444" /><path d="M16 8h-5M13 6l-2 2 2 2" stroke="#b3401d" /></Axes></Tool>
          <Divider />
          <Tool $w={38} aria-label="技术指标"><Sheet script /><Caret /></Tool>
          <Tool $w={38} aria-label="周期"><ClockIcon /><Caret /></Tool>
          <Tool $w={38} aria-label="模板"><Template /><Caret /></Tool>
        </ToolGroup>
        <SearchArea>
          <SearchBox>
            <SearchInput aria-label="搜索" />
            <svg width="15" height="15" viewBox="0 0 15 15" fill="none">
              <circle cx="9.500" cy="5.500" r="4" stroke="#3a6390" strokeWidth="1.500" />
              <path d="M6.500 8.500L2 13" stroke="#3a6390" strokeWidth="2.500" />
            </svg>
          </SearchBox>
          <NewsButton type="button" aria-label="消息">
            <svg width="18" height="18" viewBox="0 0 18 18">
              <path d="M1 1h16v12H8l-2 4-2-4H1z" fill="#5c7fae" />
              <text x="6" y="11" fill="#fff" fontFamily="Open Sans, sans-serif" fontSize="11" fontWeight="700">4</text>
            </svg>
          </NewsButton>
        </SearchArea>
      </Toolbar>

      <Toolbar $h={26}>
        <ToolGroup>
          <Grip />
          <Tool $on aria-label="光标"><Cursor /></Tool>
          <Tool aria-label="十字线"><Line d="M9.500 2v5M9.500 12v5M2 9.500h5M12 9.500h5" /></Tool>
          <Divider />
          <Tool aria-label="垂直线"><Line d="M9.500 3v12" /></Tool>
          <Tool aria-label="水平线"><Line d="M3 9.500h12" /></Tool>
          <Tool aria-label="趋势线"><Line d="M3 15L15 3" /></Tool>
          <Tool aria-label="通道"><Channel /></Tool>
          <Tool aria-label="斐波那契"><Fibo /></Tool>
          <Tool aria-label="文字"><LetterA /></Tool>
          <Tool aria-label="文本标签"><LetterT /></Tool>
          <Tool $w={40} aria-label="箭头"><Shapes /><Caret /></Tool>
        </ToolGroup>
        <ToolGroup>
          <Grip />
          {PERIODS.map((p) => (
            <Period key={p} $on={p === "M5"}>{p}</Period>
          ))}
        </ToolGroup>
      </Toolbar>

      <Workspace>
        <Side>
          <Panel>
            <PanelTitle>市场报价: 15:17:02<CloseButton aria-label="关闭"><Cross /></CloseButton></PanelTitle>
            <PanelBody>
              <Quotes>
                <colgroup><col width="69" /><col width="46" /><col width="47" /></colgroup>
                <thead><tr><th>交易品种</th><th>卖价</th><th>买价</th></tr></thead>
                <tbody>
                  {QUOTES.map(([name, price, up], i) => (
                    <QuoteRow key={i} $up={up} $sel={i === 3}>
                      <td><SymbolCell><Arrow up={up} />{name}</SymbolCell></td>
                      <td>{price}</td>
                      <td>{price}</td>
                    </QuoteRow>
                  ))}
                </tbody>
              </Quotes>
              <ScrollTrack><ScrollArrow /><ScrollThumb /><ScrollArrow $down /></ScrollTrack>
            </PanelBody>
            <Tabs $side><Tab $on>交易品种</Tab><Tab>即时图</Tab></Tabs>
          </Panel>
          <Panel $grow>
            <PanelTitle>导航<CloseButton aria-label="关闭"><Cross /></CloseButton></PanelTitle>
            <PanelBody $grow>
              <Tree>
                <li>
                  <TreeRow $indent={6}><Windows /><TreeLabel>MetaTrader</TreeLabel></TreeRow>
                  <Branch $x={13} $end={9}>
                    <li>
                      <TreeRow $indent={9}><Toggle aria-label="折叠"><Minus /></Toggle><Dots /><People pair /><TreeLabel>账户</TreeLabel></TreeRow>
                      <Branch $x={34} $end={27}>
                        <li>
                          <TreeRow $indent={30}><Toggle aria-label="折叠"><Minus /></Toggle><Dots /><Server /><TreeLabel>Exness-Trial2</TreeLabel></TreeRow>
                          <Branch $x={55} $end={9}>
                            <li><TreeRow $indent={56}><Dots $w={12} /><People /><TreeMask /></TreeRow></li>
                          </Branch>
                        </li>
                      </Branch>
                    </li>
                    <li><TreeRow $indent={9}><Toggle aria-label="展开"><Minus plus /></Toggle><Dots /><Indicator /><TreeLabel>技术指标</TreeLabel></TreeRow></li>
                    <li><TreeRow $indent={9}><Toggle aria-label="展开"><Minus plus /></Toggle><Dots /><Hat size={16} /><TreeLabel>EA交易</TreeLabel></TreeRow></li>
                    <li><TreeRow $indent={9}><Toggle aria-label="展开"><Minus plus /></Toggle><Dots /><ScriptIcon /><TreeLabel>脚本</TreeLabel></TreeRow></li>
                  </Branch>
                </li>
              </Tree>
            </PanelBody>
            <Tabs $side><Tab $on>常用</Tab><Tab>收藏夹</Tab></Tabs>
          </Panel>
        </Side>

        <ChartColumn>
          <Chart />
          <ChartTabs>
            {CHARTS.map((c) => (
              <ChartTab key={c} $pad={11} $on={c === "EURJPYm,M5"}>{c}</ChartTab>
            ))}
            <TabScroll>
              <svg width="6" height="9" viewBox="0 0 6 9"><path d="M5 2L2 4.500 5 7z" fill="currentColor" /></svg>
              <svg width="6" height="9" viewBox="0 0 6 9"><path d="M1 2l3 2.500L1 7z" fill="currentColor" /></svg>
            </TabScroll>
          </ChartTabs>
        </ChartColumn>
      </Workspace>

      <Terminal>
        <Rail>
          <CloseButton aria-label="关闭终端"><Cross /></CloseButton>
          <RailLabel>终端</RailLabel>
        </Rail>
        <TerminalBody>
          <Orders>
            <colgroup>{COLUMNS.map(([, w], i) => <col key={i} width={w} />)}</colgroup>
            <thead>
              <tr>{COLUMNS.map(([c], i) => <th key={i}>{c}{i === 0 && <SortMark>/</SortMark>}</th>)}</tr>
            </thead>
            <tbody>
              {ORDERS.map((row, r) => (
                <OrderRow key={row[0]} $sel={r === 0} $alt={r % 2 === 1}>
                  {row.map((v, i) => (
                    <td key={i}>{i === 0 ? <OrderCell><OrderIcon kind={row[2]} />{v}</OrderCell> : v}</td>
                  ))}
                </OrderRow>
              ))}
            </tbody>
          </Orders>
          <Summary>
            <svg width="7" height="7" viewBox="0 0 7 7"><circle cx="3.500" cy="3.500" r="3" fill="#ddd" stroke="#888" /></svg>
            {TOTALS.map(([name, value], i) => (
              <React.Fragment key={name}>
                <Total><TotalName>{name}</TotalName> {value}</Total>
              </React.Fragment>
            ))}
            <Spacer />
            <span>99.04</span>
          </Summary>
          <Tabs>
            {TERMINAL_TABS.map((t) => (
              <Tab key={t} $on={t === "账户历史"} $pad={10}>{t}{t === "新闻" && <Badge>99</Badge>}</Tab>
            ))}
          </Tabs>
        </TerminalBody>
      </Terminal>

      <StatusBar>
        <StatusText>寻求帮助,请按F1键</StatusText>
        <StatusCell $w={135}>Default</StatusCell>
        <StatusCell $w={117} />
        <StatusCell $w={82} />
        <StatusCell $w={81} />
        <StatusCell $w={78} />
        <StatusCell $w={80} />
        <StatusCell $w={78} />
        <Traffic>
          <svg width="24" height="13" viewBox="0 0 24 13">
            {Array.from({ length: 8 }, (_, i) => (
              <g key={i}>
                <rect x={i * 3} y="0" width="2" height={11 - i} fill="#7d9a1e" />
                <rect x={i * 3} y={12 - i} width="2" height={1 + i} fill="#0d4a63" />
              </g>
            ))}
          </svg>
          <span>22203/10 kb</span>
        </Traffic>
      </StatusBar>

      <Taskbar>
        <Launch $w={56} aria-label="开始">
          <svg width="34" height="34" viewBox="0 0 34 34">
            <circle cx="17" cy="17" r="16" fill="#3d7198" stroke="#b8d6ea" />
            <path d="M8 10q4-3 8 0v7q-4-3-8 0z" fill="#e9672e" />
            <path d="M17 10q4 3 8 0v7q-4 3-8 0z" fill="#8cc63f" />
            <path d="M8 18q4-3 8 0v7q-4-3-8 0z" fill="#3fa9e5" />
            <path d="M17 18q4 3 8 0v7q-4 3-8 0z" fill="#fbc62d" />
          </svg>
        </Launch>
        <Launch $w={66} aria-label="Internet Explorer">
          <svg width="30" height="30" viewBox="0 0 30 30" fill="none">
            <circle cx="15" cy="16" r="9" stroke="#2f8fd6" strokeWidth="5" />
            <path d="M8 17h16" stroke="#2f8fd6" strokeWidth="4" />
            <path d="M3 26Q0 18 13 9T28 4" stroke="#f1c53d" strokeWidth="2" />
          </svg>
        </Launch>
        <Launch $w={58} aria-label="资源管理器">
          <svg width="30" height="30" viewBox="0 0 30 30">
            <path d="M2 3h9l2 3h15v19H2z" fill="#f2d885" stroke="#c9a54a" />
            <path d="M5 3h4v3H5z" fill="#46a546" /><path d="M14 3h6v3h-6z" fill="#d65a3c" />
            <path d="M2 10h26v15H2z" fill="#f9e8ae" />
            <path d="M6 28v-7h18v7h-5v-4h-8v4z" fill="#8fc3e8" />
          </svg>
        </Launch>
        <Launch $w={66} aria-label="媒体播放器">
          <svg width="28" height="28" viewBox="0 0 28 28">
            <path d="M8 3h18v21H8z" fill="#6fb1dd" stroke="#3d83b5" />
            <rect x="1" y="1" width="22" height="25" fill="#8fc0e2" stroke="#3d83b5" />
            <circle cx="11" cy="14" r="8" fill="#ee7d22" stroke="#fff" /><path d="M8 9l8 5-8 5z" fill="#fff" />
          </svg>
        </Launch>
        <Launch $w={55} aria-label="HK">
          <svg width="32" height="28" viewBox="0 0 32 28">
            <rect width="32" height="28" fill="#fff" /><path d="M0 1h32M0 27h32" stroke="#111" strokeWidth="2" />
            <path d="M4 5v18M14 5v18M4 14h10M18 5v18M29 5L19 14l10 9" stroke="#111" strokeWidth="4" fill="none" />
          </svg>
        </Launch>
        <TaskMask />
        <Launch $w={57} $open aria-label="记事本">
          <svg width="32" height="30" viewBox="0 0 32 30">
            <path d="M10 2l19 1-5 25-6 1z" fill="#e8eef2" stroke="#8a9aa8" />
            <path d="M9 2h18l-6 25L2 25z" fill="#6cb3c4" stroke="#3f7f94" />
            <path d="M9 3h18" stroke="#46545f" strokeWidth="2" strokeDasharray="2 1" />
          </svg>
        </Launch>
        <Launch $w={58} $open aria-label="画图">
          <svg width="32" height="30" viewBox="0 0 32 30">
            <path d="M2 16Q2 5 15 5q13 0 13 10 0 6-6 5-5 0-4 4 0 4-6 3Q2 26 2 16z" fill="#dce9f4" stroke="#7391b0" />
            <circle cx="8" cy="14" r="2" fill="#d23a2e" /><circle cx="14" cy="10" r="2" fill="#4aa83c" />
            <circle cx="20" cy="11" r="2" fill="#efb62c" /><circle cx="9" cy="21" r="2" fill="#3f7fd0" />
            <path d="M28 1q3 2 1 8l-9 18-2-1 6-18q1-6 4-7z" fill="#c98a3d" stroke="#8a5a20" />
          </svg>
        </Launch>
        <Spacer />
        <Tray>
          CH
          <svg width="15" height="10" viewBox="0 0 15 10"><rect x=".5" y="1.500" width="14" height="8" fill="#ddd" stroke="#777" /><path d="M2 4h11M2 6h11M4 8h7" stroke="#666" strokeDasharray="1 1" /></svg>
          <svg width="9" height="22" viewBox="0 0 9 22" fill="none"><path d="M3 3V1h5v3H6M1 3h5v3H1z" stroke="#fff" /><path d="M1 16h6l-3 3z" fill="#fff" /></svg>
          <svg width="9" height="6" viewBox="0 0 9 6"><path d="M0 5h9L4.500 0z" fill="#fff" /></svg>
        </Tray>
        <TrayMask />
        <svg width="16" height="16" viewBox="0 0 16 16" fill="none"><rect x="4" y="3" width="11" height="8" fill="#53677f" stroke="#fff" strokeWidth="1.500" /><path d="M6 14h8M1 1v4h3M2 5v9h3" stroke="#fff" strokeWidth="1.500" /></svg>
        <svg width="23" height="16" viewBox="0 0 23 16" fill="none"><path d="M7 6h2l4-4v12l-4-4H7z" fill="#fff" /><path d="M15 5q2 3 0 6M17 3q4 5 0 10M19 1q6 7 0 14" stroke="#fff" /></svg>
        <Clock>23:16<br />2015/4/8</Clock>
        <ShowDesktop aria-label="显示桌面" />
        <Watermark><Brush>韬客外汇</Brush><Site>talkforex.com</Site></Watermark>
      </Taskbar>
    </Window>
  );
}

function Minus({ plus }: { plus?: boolean }) {
  return (
    <svg width="5" height="5" viewBox="0 0 5 5">
      <path d={plus ? "M0 2.500h5M2.500 0v5" : "M0 2.500h5"} stroke="#333" />
    </svg>
  );
}
